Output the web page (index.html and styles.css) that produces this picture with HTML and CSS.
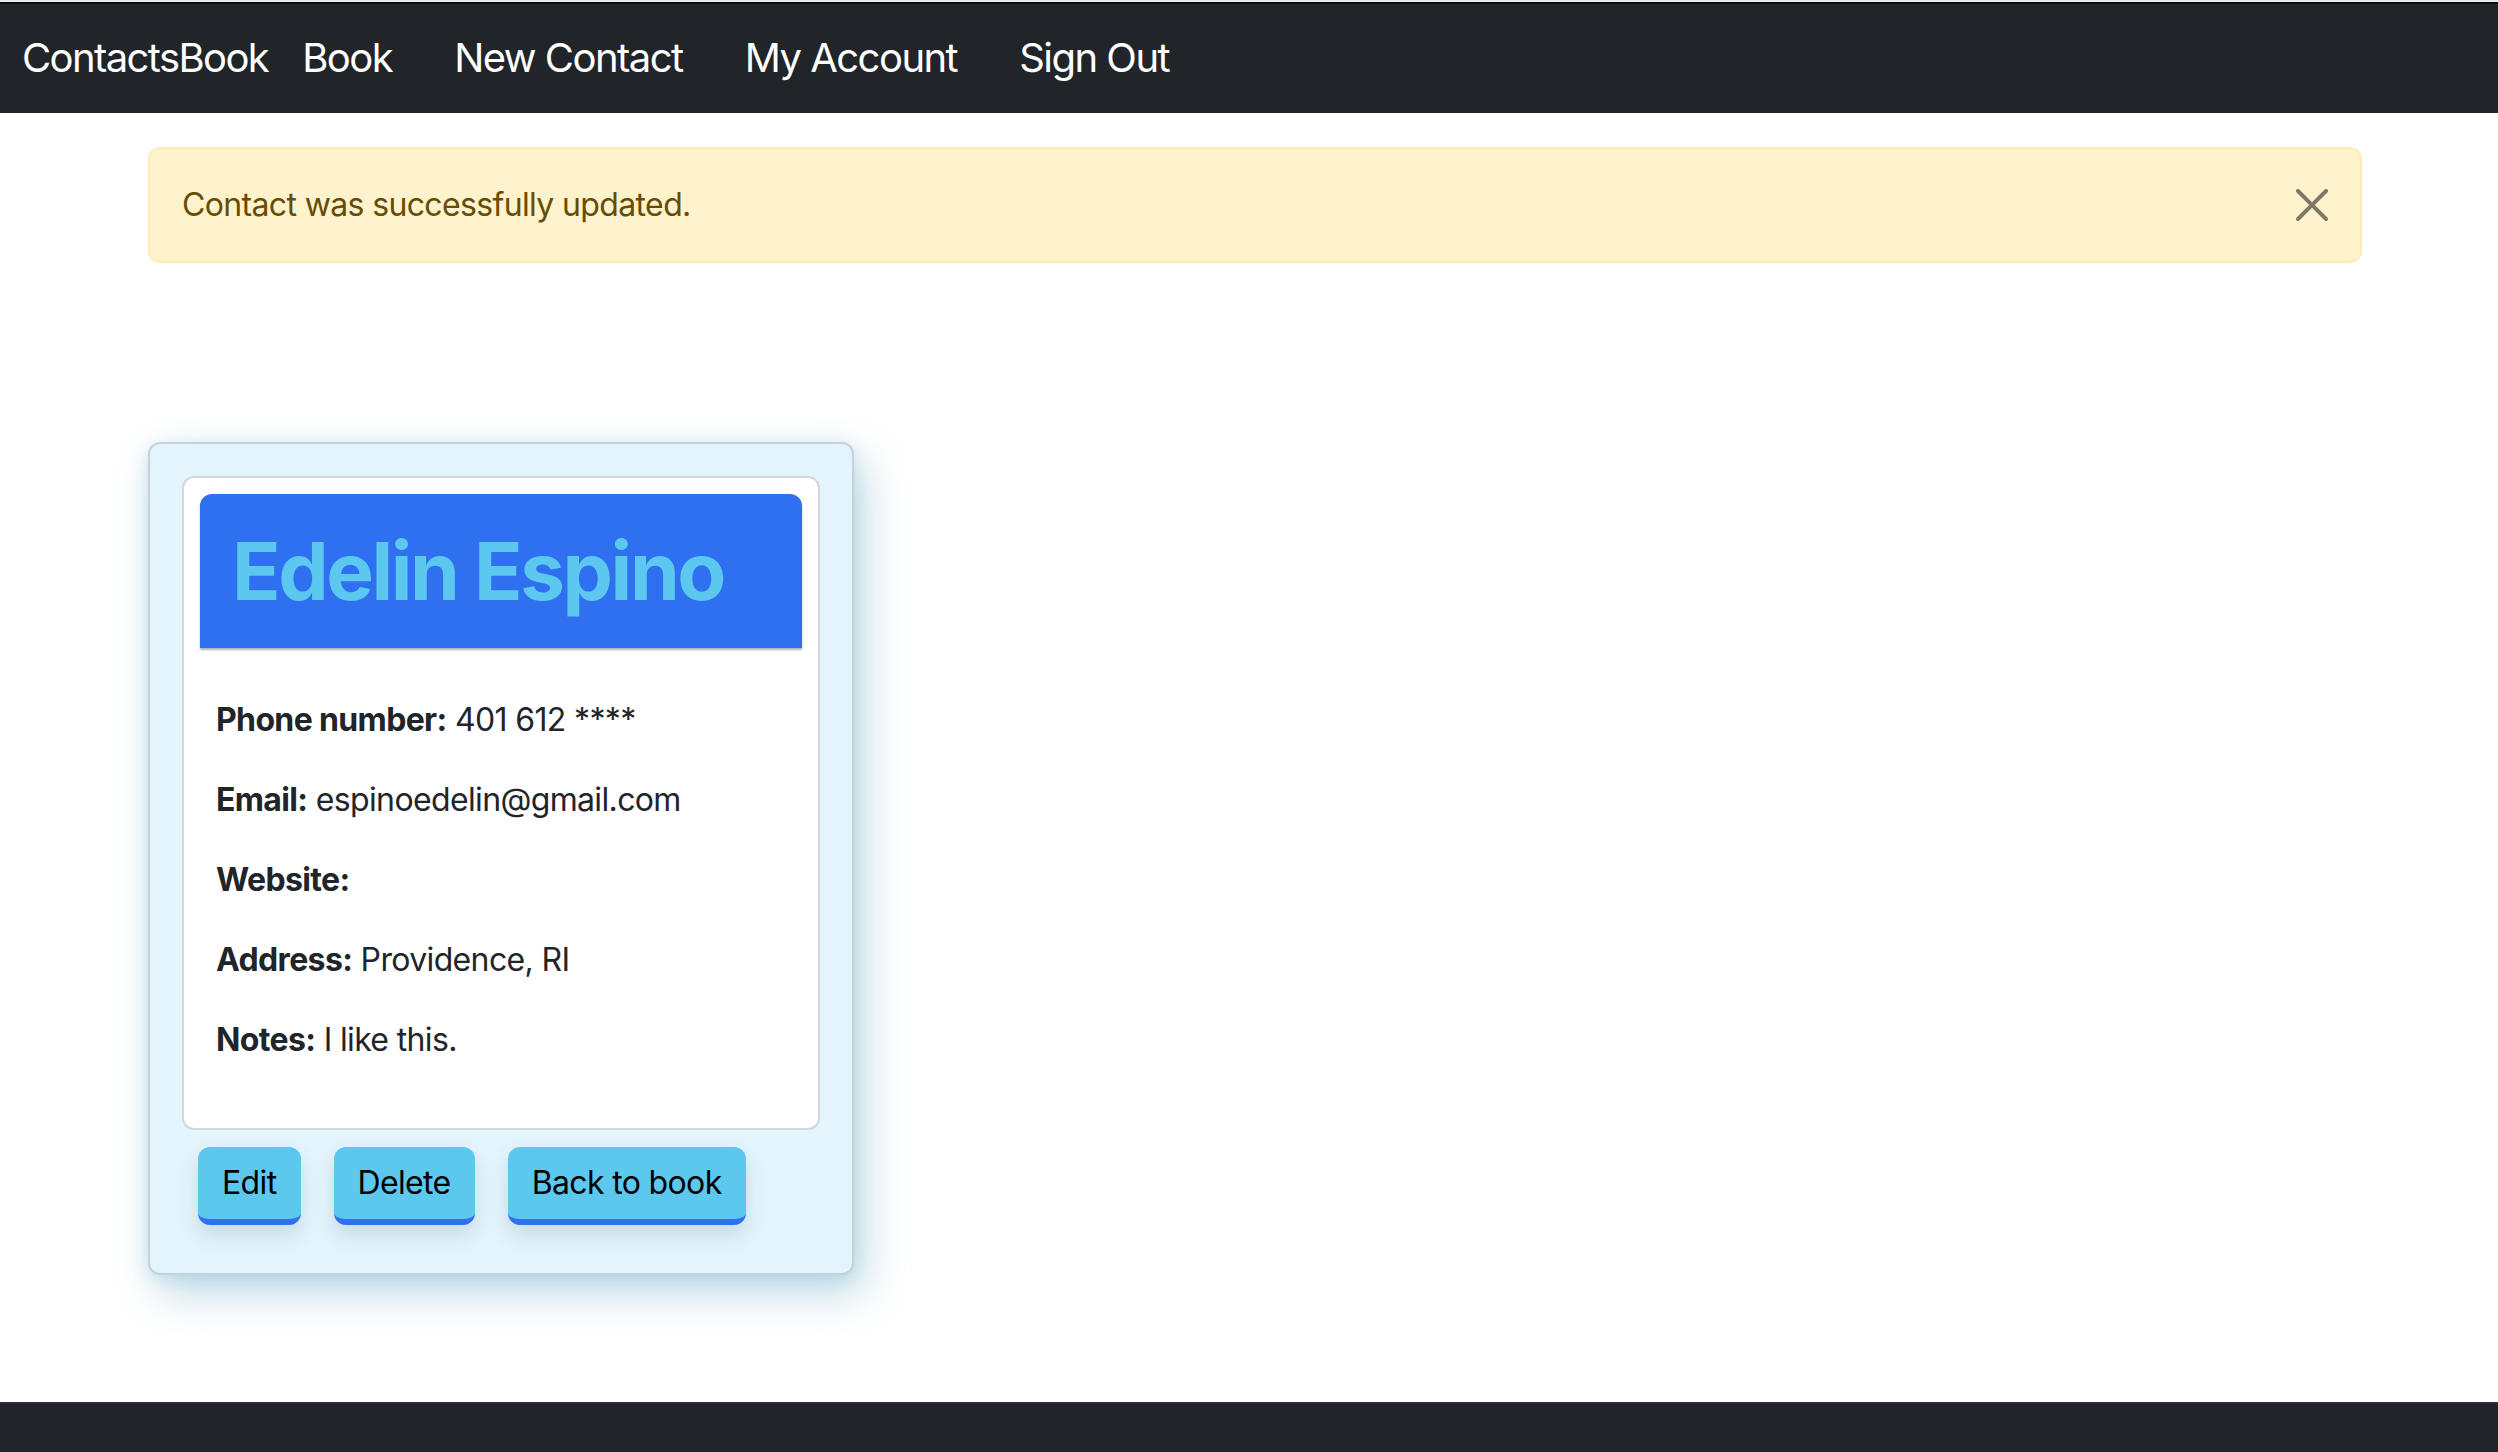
FILE: index.html
```html
<!DOCTYPE html>
<html lang="en">
<head>
<meta charset="utf-8">
<title>ContactsBook</title>
<link rel="stylesheet" href="styles.css">
</head>
<body>
<nav class="navbar">
  <a class="brand" href="#">ContactsBook</a>
  <ul class="nav-links">
    <li><a href="#">Book</a></li>
    <li><a href="#">New Contact</a></li>
    <li><a href="#">My Account</a></li>
    <li><a href="#">Sign Out</a></li>
  </ul>
</nav>
<main class="container">
  <div class="alert">
    <span class="alert-text">Contact was successfully updated.</span>
    <button class="btn-close" type="button" aria-label="Close">
      <svg viewBox="0 0 16 16" width="32" height="32"><path d="M.293.293a1 1 0 0 1 1.414 0L8 6.586 14.293.293a1 1 0 1 1 1.414 1.414L9.414 8l6.293 6.293a1 1 0 0 1-1.414 1.414L8 9.414l-6.293 6.293a1 1 0 0 1-1.414-1.414L6.586 8 .293 1.707a1 1 0 0 1 0-1.414z" fill="#000"/></svg>
    </button>
  </div>
  <section class="contact-card">
    <div class="contact-inner">
      <div class="contact-header"><h1>Edelin Espino</h1></div>
      <div class="contact-details">
        <p><strong>Phone number:</strong> 401 612 ****</p>
        <p><strong>Email:</strong> espinoedelin@gmail.com</p>
        <p><strong>Website:</strong> </p>
        <p><strong>Address:</strong> Providence, RI</p>
        <p><strong>Notes:</strong> I like this.</p>
      </div>
    </div>
    <div class="actions">
      <a class="btn" href="#">Edit</a>
      <a class="btn" href="#">Delete</a>
      <a class="btn" href="#">Back to book</a>
    </div>
  </section>
</main>
<footer class="footer"></footer>
</body>
</html>
```
FILE: styles.css
```css
* { box-sizing: border-box; }
html, body { margin: 0; padding: 0; }
body {
  min-height: 100vh;
  display: flex;
  flex-direction: column;
  font-family: Inter, "Liberation Sans", Arial, sans-serif;
  font-size: 32px;
  line-height: 1.5;
  color: #212529;
  letter-spacing: -0.02em;
  padding-top: 2px;
  background: #e9e9e9;
}
.navbar {
  height: 111px;
  display: flex;
  align-items: center;
  padding: 0 0 1px 22px;
  background: #212529;
  border-top: 2px solid #0b0c0d;
}
.brand {
  color: #fff;
  text-decoration: none;
  font-size: 40px;
  letter-spacing: -0.04em;
  margin-right: 34px;
}
.nav-links {
  display: flex;
  gap: 62px;
  list-style: none;
  margin: 0;
  padding: 0;
}
.nav-links a {
  color: #fff;
  text-decoration: none;
  font-size: 40px;
  letter-spacing: -0.038em;
}
.container {
  flex: 1;
  background: #fff;
  padding: 34px 0 0 148px;
}
.alert {
  width: 2214px;
  display: flex;
  align-items: center;
  padding: 32px;
  background: #fff3cd;
  border: 2px solid #ffecb5;
  border-radius: 12px;
  color: #664d03;
  line-height: 48px;
}
.btn-close {
  margin-left: auto;
  width: 32px;
  height: 32px;
  padding: 0;
  border: 0;
  background: transparent;
  opacity: 0.5;
  display: flex;
}
.contact-card {
  width: 706px;
  margin-top: 179px;
  padding: 32px 32px 48px;
  background: #e3f4fc;
  border: 2px solid #c6d2d9;
  border-radius: 12px;
  box-shadow: 10px 18px 44px rgba(110, 175, 200, 0.45), 0 4px 16px rgba(110, 175, 200, 0.25);
}
.contact-inner {
  background: #fff;
  border: 2px solid #d3d7db;
  border-radius: 12px;
  padding: 16px;
}
.contact-header {
  background: #2f70f1;
  border-radius: 12px 12px 0 0;
  padding: 32px;
  box-shadow: 0 2px 2px rgba(20, 40, 90, 0.35);
}
.contact-header h1 {
  margin: 0;
  font-size: 80px;
  line-height: 90px;
  font-weight: 700;
  letter-spacing: -2.4px;
  color: #5cc7ef;
}
.contact-details {
  padding: 48px 16px 16px;
}
.contact-details p {
  margin: 0 0 32px;
  line-height: 48px;
}
.contact-details strong { font-weight: 700; }
.actions {
  display: flex;
  gap: 33px;
  margin-top: 17px;
  padding-left: 16px;
}
.btn {
  display: block;
  padding: 12px 24px;
  line-height: 48px;
  background: #5cc8ee;
  color: #000;
  text-decoration: none;
  border-radius: 12px;
  border-bottom: 6px solid #2f70f1;
  box-shadow: 0 10px 20px rgba(60, 90, 110, 0.16);
}
.footer {
  height: 50px;
  background: #212529;
  border-top: 2px solid #2a2e33;
}
```
